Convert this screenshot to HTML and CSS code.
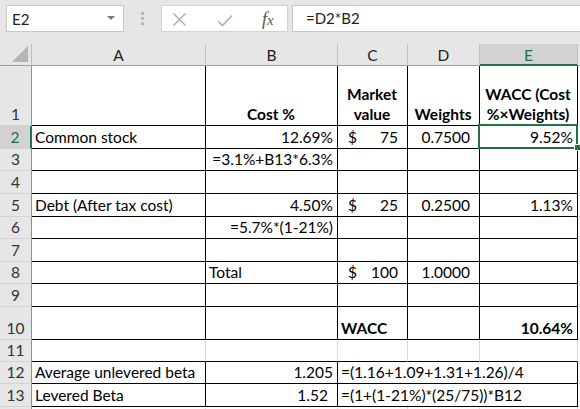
FILE: index.html
```html
<!DOCTYPE html>
<html>
<head>
<meta charset="utf-8">
<link rel="stylesheet" href="styles.css">
</head>
<body>
<div class="app">
  <div class="toolbar">
    <div class="namebox">
      <span>E2</span>
      <svg width="8" height="5" viewBox="0 0 8 5"><polygon points="0,0 8,0 4,4" fill="#7a7a7a"/></svg>
    </div>
    <div class="grip">
      <svg width="3" height="13" viewBox="0 0 3 13"><rect x="0" y="0" width="3" height="3" fill="#b8b8b8"/><rect x="0" y="5" width="3" height="3" fill="#b8b8b8"/><rect x="0" y="10" width="3" height="3" fill="#b8b8b8"/></svg>
    </div>
    <div class="fbtns">
      <svg class="ico-x" width="15" height="15" viewBox="0 0 15 15"><path d="M1.5 1.5 L13.5 13.5 M13.5 1.5 L1.5 13.5" stroke="#a9a9a9" stroke-width="1.3" fill="none"/></svg>
      <svg class="ico-ok" width="16" height="13" viewBox="0 0 16 13"><path d="M1 7 L5.5 11.5 L15 1.5" stroke="#b0b0b0" stroke-width="1.6" fill="none"/></svg>
      <span class="fx"><i>f</i><i class="fx-x">x</i></span>
    </div>
    <div class="fbar">=D2*B2</div>
  </div>

  <div class="sheet">
    <!-- column headers -->
    <div class="corner"><svg width="16" height="16" viewBox="0 0 16 16"><polygon points="16,0 16,16 0,16" fill="#b4b4b4"/></svg></div>
    <div class="ch">A</div>
    <div class="ch">B</div>
    <div class="ch">C</div>
    <div class="ch">D</div>
    <div class="ch ch-sel">E</div>
    <div class="ch ch-f"></div>

    <!-- row 1 -->
    <div class="rh">1</div>
    <div class="c bd"></div>
    <div class="c bd b ctr">Cost %</div>
    <div class="c bd b ctr">Market value</div>
    <div class="c bd b ctr">Weights</div>
    <div class="c bd b ctr">WACC (Cost %×Weights)</div>
    <div class="c f"></div>

    <!-- row 2 -->
    <div class="rh rh-sel">2</div>
    <div class="c bd">Common stock</div>
    <div class="c bd r">12.69%</div>
    <div class="c bd acc"><span>$</span><span>75</span></div>
    <div class="c bd r pr9">0.7500</div>
    <div class="c bd r active">9.52%<span class="handle"></span></div>
    <div class="c f"></div>

    <!-- row 3 -->
    <div class="rh">3</div>
    <div class="c bd"></div>
    <div class="c bd r">=3.1%+B13*6.3%</div>
    <div class="c bd"></div>
    <div class="c bd"></div>
    <div class="c bd"></div>
    <div class="c f"></div>

    <!-- row 4 -->
    <div class="rh">4</div>
    <div class="c bd"></div>
    <div class="c bd"></div>
    <div class="c bd"></div>
    <div class="c bd"></div>
    <div class="c bd"></div>
    <div class="c f"></div>

    <!-- row 5 -->
    <div class="rh">5</div>
    <div class="c bd">Debt (After tax cost)</div>
    <div class="c bd r">4.50%</div>
    <div class="c bd acc"><span>$</span><span>25</span></div>
    <div class="c bd r pr9">0.2500</div>
    <div class="c bd r">1.13%</div>
    <div class="c f"></div>

    <!-- row 6 -->
    <div class="rh">6</div>
    <div class="c bd"></div>
    <div class="c bd r">=5.7%*(1-21%)</div>
    <div class="c bd"></div>
    <div class="c bd"></div>
    <div class="c bd"></div>
    <div class="c f"></div>

    <!-- row 7 -->
    <div class="rh">7</div>
    <div class="c bd"></div>
    <div class="c bd"></div>
    <div class="c bd"></div>
    <div class="c bd"></div>
    <div class="c bd"></div>
    <div class="c f"></div>

    <!-- row 8 -->
    <div class="rh">8</div>
    <div class="c bd"></div>
    <div class="c bd">Total</div>
    <div class="c bd acc"><span>$</span><span>100</span></div>
    <div class="c bd r pr9">1.0000</div>
    <div class="c bd"></div>
    <div class="c f"></div>

    <!-- row 9 -->
    <div class="rh">9</div>
    <div class="c bd"></div>
    <div class="c bd"></div>
    <div class="c bd"></div>
    <div class="c bd"></div>
    <div class="c bd"></div>
    <div class="c f"></div>

    <!-- row 10 -->
    <div class="rh">10</div>
    <div class="c bd"></div>
    <div class="c bd"></div>
    <div class="c bd b">WACC</div>
    <div class="c bd"></div>
    <div class="c bd r b">10.64%</div>
    <div class="c f"></div>

    <!-- row 11 -->
    <div class="rh">11</div>
    <div class="c bb"></div>
    <div class="c bb"></div>
    <div class="c bb"></div>
    <div class="c bb"></div>
    <div class="c bb"></div>
    <div class="c f"></div>

    <!-- row 12 -->
    <div class="rh">12</div>
    <div class="c bd">Average unlevered beta</div>
    <div class="c bd r">1.205</div>
    <div class="c bd span3">=(1.16+1.09+1.31+1.26)/4</div>
    <div class="c f"></div>

    <!-- row 13 -->
    <div class="rh">13</div>
    <div class="c bd">Levered Beta</div>
    <div class="c bd r pr9">1.52</div>
    <div class="c bd span3">=(1+(1-21%)*(25/75))*B12</div>
    <div class="c f"></div>

    <!-- row 14 (only its top edge is in view) -->
    <div class="rh"></div>
    <div class="c"></div>
    <div class="c"></div>
    <div class="c"></div>
    <div class="c"></div>
    <div class="c"></div>
    <div class="c f"></div>
  </div>
</div>
</body>
</html>
```

FILE: styles.css
```css
* {
  box-sizing: border-box;
}

html, body {
  margin: 0;
  padding: 0;
}

body {
  background: #e6e6e6;
  font-family: "Lato", "Liberation Sans", sans-serif;
  overflow: hidden;
}

.app {
  width: 580px;
  height: 409px;
  overflow: hidden;
  display: flex;
  flex-direction: column;
}

/* ---------- formula toolbar ---------- */
.toolbar {
  height: 44px;
  flex: none;
  display: flex;
  align-items: flex-start;
  padding: 5px 0 0 6px;
}

.namebox {
  width: 118px;
  height: 27px;
  background: #fff;
  border: 1px solid #c9c9c9;
  display: flex;
  align-items: center;
  justify-content: space-between;
  padding: 0 8px 0 5px;
  font-size: 15px;
  color: #222;
}

.grip {
  width: 37px;
  height: 27px;
  display: flex;
  justify-content: center;
  padding-top: 7px;
}

.fbtns {
  width: 127px;
  height: 27px;
  background: #fff;
  border: 1px solid #d3d3d3;
  display: flex;
  align-items: center;
  padding-left: 10px;
}

.ico-x {
  margin-top: 1px;
}

.ico-ok {
  margin-left: 30px;
  margin-top: 3px;
}

.fx {
  margin-left: 29px;
  font-family: "Liberation Serif", "DejaVu Serif", serif;
  font-size: 18px;
  color: #555;
  line-height: 1;
}

.fx-x {
  font-size: 15px;
}

.fbar {
  flex: 1;
  margin-left: 4px;
  height: 27px;
  background: #fff;
  border: 1px solid #c9c9c9;
  border-right: none;
  padding-left: 13px;
  font-size: 15px;
  line-height: 25px;
  color: #222;
}

/* ---------- sheet grid ---------- */
.sheet {
  flex: 1;
  display: grid;
  grid-template-columns: 32px 174px 132px 70px 72px 98px 1fr;
  grid-template-rows: 22px 60px 23px 22px 23px 23px 22px 23px 22px 23px 33px 22px 22px 23px 23px;
  background: #fff;
}

.corner {
  background: #e6e6e6;
  border-right: 1px solid #bdbdbd;
  border-bottom: 1px solid #9e9e9e;
  display: flex;
  align-items: flex-end;
  justify-content: flex-end;
  padding: 0 3px 3px 0;
}

.ch {
  background: #e6e6e6;
  border-right: 1px solid #c2c2c2;
  border-bottom: 1px solid #9e9e9e;
  display: flex;
  align-items: center;
  justify-content: center;
  font-size: 15.5px;
  color: #222;
  padding-top: 1px;
}

.ch-sel {
  background: #d2d2d2;
  color: #217346;
  border-bottom: 2px solid #217346;
}

.ch-f {
  border-right: none;
}

.rh {
  background: #e6e6e6;
  border-right: 1px solid #8f8f8f;
  border-bottom: 1px solid #d2d2d2;
  display: flex;
  align-items: flex-end;
  justify-content: center;
  font-size: 15.5px;
  line-height: 20px;
  color: #333;
  padding-bottom: 1px;
}

.rh-sel {
  background: #d2d2d2;
  color: #2d6a47;
  border-right: 2px solid #217346;
}

.c {
  border-right: 1px solid #d9d9d9;
  border-bottom: 1px solid #d9d9d9;
  display: flex;
  align-items: flex-end;
  padding: 0 4px 1px 3px;
  font-size: 15.5px;
  line-height: 20px;
  color: #000;
  white-space: nowrap;
}

.bd {
  border-right-color: #000;
  border-bottom-color: #000;
}

.bb {
  border-bottom-color: #000;
}

.f {
  border-right: none;
}

.r {
  justify-content: flex-end;
}

.ctr {
  justify-content: center;
  text-align: center;
  white-space: normal;
}

.b {
  font-weight: 700;
}

.acc {
  justify-content: space-between;
  padding-left: 10px;
  padding-right: 9px;
}

.pr9 {
  padding-right: 9px;
}

.span3 {
  grid-column: span 3;
}

/* active cell E2 */
.active {
  position: relative;
}

.active::after {
  content: "";
  position: absolute;
  left: -2px;
  top: -2px;
  right: -1px;
  bottom: -1px;
  border: 2px solid #217346;
}

.handle {
  position: absolute;
  right: -4px;
  bottom: -3px;
  width: 7px;
  height: 7px;
  background: #217346;
  border: 1px solid #fff;
  z-index: 2;
}
```
